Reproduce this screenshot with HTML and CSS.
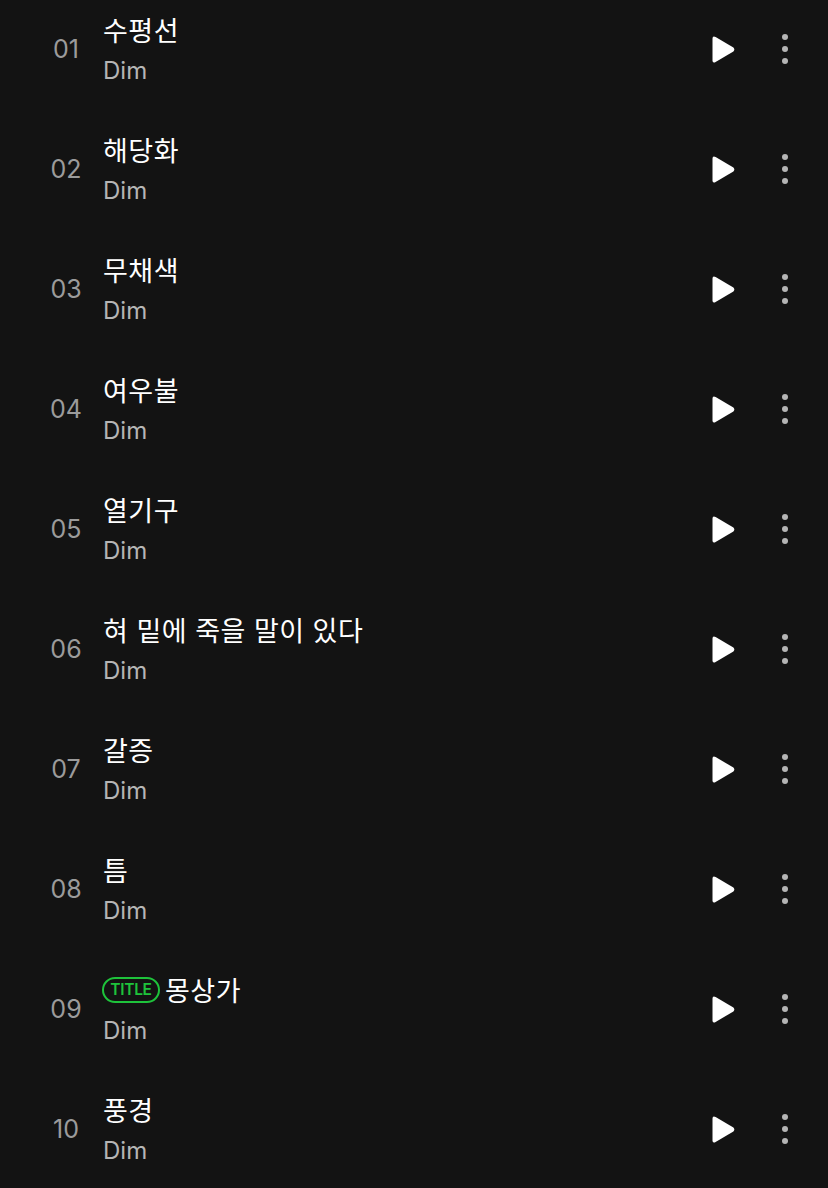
FILE: index.html
```html
<!DOCTYPE html>
<html lang="ko">
<head>
<meta charset="utf-8">
<link rel="stylesheet" href="styles.css">
</head>
<body>
<ul class="tracks">
  <li class="track"><span class="num">01</span><div class="info"><div class="title">수평선</div><div class="artist">Dim</div></div><button class="play"><svg viewBox="0 0 23 29" width="23" height="29"><path d="M0.5 3.8 Q0.5 0.3 3.6 2 L21.4 12.6 Q23.2 14.5 21.4 16.4 L3.6 27 Q0.5 28.7 0.5 25.2 Z" fill="#fff"/></svg></button><button class="more"><span></span><span></span><span></span></button></li>
  <li class="track"><span class="num">02</span><div class="info"><div class="title">해당화</div><div class="artist">Dim</div></div><button class="play"><svg viewBox="0 0 23 29" width="23" height="29"><path d="M0.5 3.8 Q0.5 0.3 3.6 2 L21.4 12.6 Q23.2 14.5 21.4 16.4 L3.6 27 Q0.5 28.7 0.5 25.2 Z" fill="#fff"/></svg></button><button class="more"><span></span><span></span><span></span></button></li>
  <li class="track"><span class="num">03</span><div class="info"><div class="title">무채색</div><div class="artist">Dim</div></div><button class="play"><svg viewBox="0 0 23 29" width="23" height="29"><path d="M0.5 3.8 Q0.5 0.3 3.6 2 L21.4 12.6 Q23.2 14.5 21.4 16.4 L3.6 27 Q0.5 28.7 0.5 25.2 Z" fill="#fff"/></svg></button><button class="more"><span></span><span></span><span></span></button></li>
  <li class="track"><span class="num">04</span><div class="info"><div class="title">여우불</div><div class="artist">Dim</div></div><button class="play"><svg viewBox="0 0 23 29" width="23" height="29"><path d="M0.5 3.8 Q0.5 0.3 3.6 2 L21.4 12.6 Q23.2 14.5 21.4 16.4 L3.6 27 Q0.5 28.7 0.5 25.2 Z" fill="#fff"/></svg></button><button class="more"><span></span><span></span><span></span></button></li>
  <li class="track"><span class="num">05</span><div class="info"><div class="title">열기구</div><div class="artist">Dim</div></div><button class="play"><svg viewBox="0 0 23 29" width="23" height="29"><path d="M0.5 3.8 Q0.5 0.3 3.6 2 L21.4 12.6 Q23.2 14.5 21.4 16.4 L3.6 27 Q0.5 28.7 0.5 25.2 Z" fill="#fff"/></svg></button><button class="more"><span></span><span></span><span></span></button></li>
  <li class="track"><span class="num">06</span><div class="info"><div class="title">혀 밑에 죽을 말이 있다</div><div class="artist">Dim</div></div><button class="play"><svg viewBox="0 0 23 29" width="23" height="29"><path d="M0.5 3.8 Q0.5 0.3 3.6 2 L21.4 12.6 Q23.2 14.5 21.4 16.4 L3.6 27 Q0.5 28.7 0.5 25.2 Z" fill="#fff"/></svg></button><button class="more"><span></span><span></span><span></span></button></li>
  <li class="track"><span class="num">07</span><div class="info"><div class="title">갈증</div><div class="artist">Dim</div></div><button class="play"><svg viewBox="0 0 23 29" width="23" height="29"><path d="M0.5 3.8 Q0.5 0.3 3.6 2 L21.4 12.6 Q23.2 14.5 21.4 16.4 L3.6 27 Q0.5 28.7 0.5 25.2 Z" fill="#fff"/></svg></button><button class="more"><span></span><span></span><span></span></button></li>
  <li class="track"><span class="num">08</span><div class="info"><div class="title">틈</div><div class="artist">Dim</div></div><button class="play"><svg viewBox="0 0 23 29" width="23" height="29"><path d="M0.5 3.8 Q0.5 0.3 3.6 2 L21.4 12.6 Q23.2 14.5 21.4 16.4 L3.6 27 Q0.5 28.7 0.5 25.2 Z" fill="#fff"/></svg></button><button class="more"><span></span><span></span><span></span></button></li>
  <li class="track"><span class="num">09</span><div class="info"><div class="title"><span class="badge">TITLE</span>몽상가</div><div class="artist">Dim</div></div><button class="play"><svg viewBox="0 0 23 29" width="23" height="29"><path d="M0.5 3.8 Q0.5 0.3 3.6 2 L21.4 12.6 Q23.2 14.5 21.4 16.4 L3.6 27 Q0.5 28.7 0.5 25.2 Z" fill="#fff"/></svg></button><button class="more"><span></span><span></span><span></span></button></li>
  <li class="track"><span class="num">10</span><div class="info"><div class="title">풍경</div><div class="artist">Dim</div></div><button class="play"><svg viewBox="0 0 23 29" width="23" height="29"><path d="M0.5 3.8 Q0.5 0.3 3.6 2 L21.4 12.6 Q23.2 14.5 21.4 16.4 L3.6 27 Q0.5 28.7 0.5 25.2 Z" fill="#fff"/></svg></button><button class="more"><span></span><span></span><span></span></button></li>
</ul>
</body>
</html>
```

FILE: styles.css
```css
html, body {
  margin: 0;
  padding: 0;
  background: #131313;
  overflow: hidden;
}
body {
  font-family: Inter, "Noto Sans CJK KR", sans-serif;
  color: #fff;
}
.tracks {
  list-style: none;
  margin: -11px 0 0 0;
  padding: 0;
}
.track {
  height: 120px;
  display: flex;
  align-items: center;
}
.num {
  margin-left: 38px;
  width: 56px;
  text-align: center;
  font-size: 25px;
  color: #9b9b9b;
}
.info {
  flex: 1;
  padding-left: 9px;
  display: flex;
  flex-direction: column;
  gap: 9px;
}
.title {
  font-size: 27px;
  line-height: 34px;
  letter-spacing: 0.5px;
  color: #fff;
  display: flex;
  align-items: center;
  font-family: "Noto Sans CJK KR", sans-serif;
}
.artist {
  font-size: 24px;
  line-height: 30px;
  color: #b5b5b5;
}
.badge {
  box-sizing: border-box;
  display: inline-flex;
  align-items: center;
  justify-content: center;
  width: 58px;
  height: 26px;
  border: 2px solid #1ec33b;
  border-radius: 13px;
  color: #1ec33b;
  font-family: Inter, sans-serif;
  font-size: 15.5px;
  font-weight: 600;
  letter-spacing: -0.3px;
  margin-right: 5px;
  margin-left: -1px;
  line-height: 1;
}
.play {
  background: none;
  border: 0;
  padding: 0;
  width: 23px;
  height: 29px;
  display: flex;
  margin-right: 46px;
}
.more {
  background: none;
  border: 0;
  padding: 0;
  width: 8px;
  display: flex;
  flex-direction: column;
  align-items: center;
  gap: 6px;
  margin-right: 39px;
}
.more span {
  width: 6px;
  height: 6px;
  border-radius: 50%;
  background: #b5b5b5;
}
```
